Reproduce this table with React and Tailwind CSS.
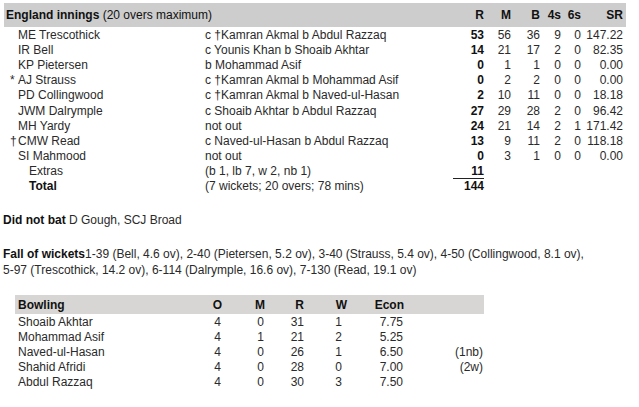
const BATTING = [
  { mark: "", name: "ME Trescothick", how: "c †Kamran Akmal b Abdul Razzaq", r: 53, m: 56, b: 36, f: 9, s: 0, sr: "147.22" },
  { mark: "", name: "IR Bell", how: "c Younis Khan b Shoaib Akhtar", r: 14, m: 21, b: 17, f: 2, s: 0, sr: "82.35" },
  { mark: "", name: "KP Pietersen", how: "b Mohammad Asif", r: 0, m: 1, b: 1, f: 0, s: 0, sr: "0.00" },
  { mark: "*", name: "AJ Strauss", how: "c †Kamran Akmal b Mohammad Asif", r: 0, m: 2, b: 2, f: 0, s: 0, sr: "0.00" },
  { mark: "", name: "PD Collingwood", how: "c †Kamran Akmal b Naved-ul-Hasan", r: 2, m: 10, b: 11, f: 0, s: 0, sr: "18.18" },
  { mark: "", name: "JWM Dalrymple", how: "c Shoaib Akhtar b Abdul Razzaq", r: 27, m: 29, b: 28, f: 2, s: 0, sr: "96.42" },
  { mark: "", name: "MH Yardy", how: "not out", r: 24, m: 21, b: 14, f: 2, s: 1, sr: "171.42" },
  { mark: "†", name: "CMW Read", how: "c Naved-ul-Hasan b Abdul Razzaq", r: 13, m: 9, b: 11, f: 2, s: 0, sr: "118.18" },
  { mark: "", name: "SI Mahmood", how: "not out", r: 0, m: 3, b: 1, f: 0, s: 0, sr: "0.00" },
];

const BOWLING = [
  { name: "Shoaib Akhtar", o: 4, m: 0, r: 31, w: 1, econ: "7.75", extra: "" },
  { name: "Mohammad Asif", o: 4, m: 1, r: 21, w: 2, econ: "5.25", extra: "" },
  { name: "Naved-ul-Hasan", o: 4, m: 0, r: 26, w: 1, econ: "6.50", extra: "(1nb)" },
  { name: "Shahid Afridi", o: 4, m: 0, r: 28, w: 0, econ: "7.00", extra: "(2w)" },
  { name: "Abdul Razzaq", o: 4, m: 0, r: 30, w: 3, econ: "7.50", extra: "" },
];

// fixed column widths so the numbers line up like the old cricinfo table
const NumCols = ({ m, b, f, s, sr }) => (
  <>
    <span className="w-[27px] text-right">{m}</span>
    <span className="w-[29px] text-right">{b}</span>
    <span className="w-[21px] text-right">{f}</span>
    <span className="w-[20px] text-right">{s}</span>
    <span className="w-[42px] text-right">{sr}</span>
  </>
);

const App = () => {
  return (
    <div className="w-[639px] h-[407px] bg-white text-[12px] leading-none text-[#2a2a2a] font-['Liberation_Sans',Arial,sans-serif] overflow-hidden">
      <div className="pt-[3px] pl-[4px]">
        <div className="w-[622px] h-[24px] bg-[#cdcdcd] flex items-center text-[#111]">
          <span className="w-[449px] pl-[2px]">
            <b className="font-bold">England innings</b> (20 overs maximum)
          </span>
          <span className="w-[31px] text-right font-bold">R</span>
          <span className="w-[27px] text-right font-bold">M</span>
          <span className="w-[29px] text-right font-bold">B</span>
          <span className="w-[21px] text-right font-bold">4s</span>
          <span className="w-[20px] text-right font-bold">6s</span>
          <span className="w-[42px] text-right font-bold">SR</span>
        </div>

        {BATTING.map((p) => (
          <div key={p.name} className="h-[15.2px] flex items-center">
            <span className="w-[6px]" />
            <span className="w-[195px] flex">
              <span className="w-[8px]">{p.mark}</span>
              {p.name}
            </span>
            <span className="w-[248px] whitespace-nowrap">{p.how}</span>
            <span className="w-[31px] text-right font-bold text-[#111]">{p.r}</span>
            <NumCols {...p} />
          </div>
        ))}

        <div className="h-[15.2px] flex items-center">
          <span className="w-[25px]" />
          <span className="w-[176px]">Extras</span>
          <span className="w-[248px]">(b 1, lb 7, w 2, nb 1)</span>
          <span className="w-[31px] h-full flex items-center justify-end font-bold text-[#111] border-b border-[#222]">11</span>
        </div>
        <div className="h-[15.2px] flex items-center">
          <span className="w-[25px]" />
          <span className="w-[176px] font-bold text-[#111]">Total</span>
          <span className="w-[248px]">(7 wickets; 20 overs; 78 mins)</span>
          <span className="w-[31px] text-right font-bold text-[#111]">144</span>
        </div>
      </div>

      <p className="mt-[20px] pl-[3px]">
        <b className="font-bold text-[#111]">Did not bat</b> D Gough, SCJ Broad
      </p>

      <p className="mt-[20px] pl-[3px] leading-[16px] w-[620px]">
        <b className="font-bold text-[#111]">Fall of wickets</b>1-39 (Bell, 4.6 ov), 2-40 (Pietersen, 5.2 ov), 3-40 (Strauss, 5.4 ov), 4-50 (Collingwood, 8.1 ov),
        <br />
        5-97 (Trescothick, 14.2 ov), 6-114 (Dalrymple, 16.6 ov), 7-130 (Read, 19.1 ov)
      </p>

      <div className="mt-[17px] ml-[15px] w-[469px]">
        <div className="h-[19px] bg-[#d8d6d4] flex items-center font-bold text-[#111]">
          <span className="w-[192px] pl-[3px]">Bowling</span>
          <span className="w-[15px] text-right">O</span>
          <span className="w-[43px] text-right">M</span>
          <span className="w-[39px] text-right">R</span>
          <span className="w-[43px] text-right">W</span>
          <span className="w-[57px] text-right">Econ</span>
        </div>
        {BOWLING.map((b) => (
          <div key={b.name} className="h-[15px] flex items-center">
            <span className="w-[192px] pl-[3px]">{b.name}</span>
            <span className="w-[14px] text-right">{b.o}</span>
            <span className="w-[43px] text-right">{b.m}</span>
            <span className="w-[40px] text-right">{b.r}</span>
            <span className="w-[38px] text-right">{b.w}</span>
            <span className="w-[61px] text-right">{b.econ}</span>
            <span className="w-[80px] text-right">{b.extra}</span>
          </div>
        ))}
      </div>
    </div>
  );
};

export default App;
